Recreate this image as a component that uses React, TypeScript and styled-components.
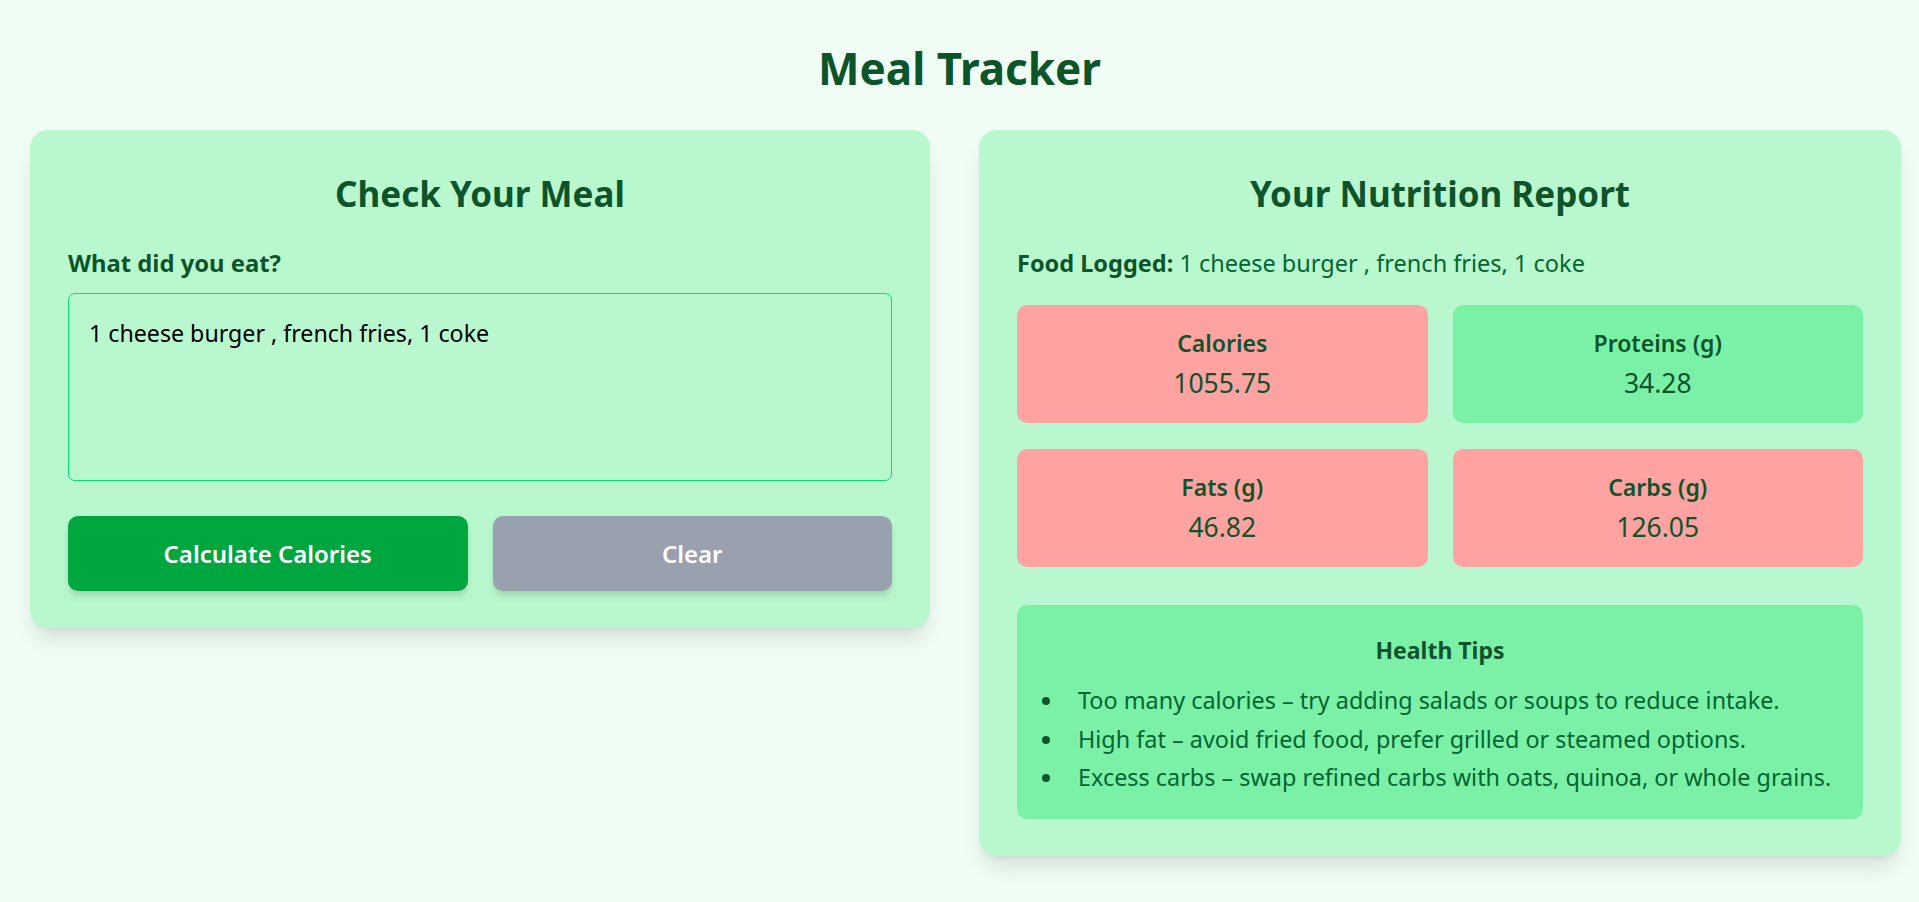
import styled, { createGlobalStyle } from 'styled-components';

const GlobalStyle = createGlobalStyle`
    * {
        box-sizing: border-box;
    }
    body {
        margin: 0;
        background-color: #f0fdf4;
        font-family: 'Noto Sans', 'Open Sans', sans-serif;
    }
`;

const Page = styled.div`
    min-height: 902px;
    padding: 36px 0 40px 0;
`;
const Title = styled.h1`
    margin: 0 0 29px 0;
    text-align: center;
    font-size: 44px;
    line-height: 65px;
    font-weight: 700;
    color: #0d542b;
`;
const Columns = styled.div`
    display: grid;
    grid-template-columns: 900fr 922fr;
    gap: 49px;
    align-items: start;
    padding: 0 18px 0 30px;
`;
const Card = styled.section`
    display: flex;
    flex-direction: column;
    padding: 37px 38px;
    background-color: #b9f8cf;
    border-radius: 18px;
    box-shadow: 0 15px 22px -4px rgba(0, 0, 0, 0.1), 0 6px 9px -6px rgba(0, 0, 0, 0.1);
`;
const CardTitle = styled.h2`
    margin: 0 0 24px 0;
    text-align: center;
    font-size: 35px;
    line-height: 54px;
    font-weight: 700;
    color: #0d542b;
`;
const Label = styled.label`
    margin-bottom: 12px;
    font-size: 23.8px;
    line-height: 36px;
    font-weight: 700;
    color: #0d542b;
`;
const MealInput = styled.textarea`
    height: 188px;
    padding: 21px 21px 21px 20px;
    resize: none;
    background-color: transparent;
    border: 1.5px solid #05df72;
    border-radius: 7px;
    font-family: inherit;
    font-size: 23.2px;
    line-height: 36px;
    color: #000000;
    outline: none;
`;
const ButtonRow = styled.div`
    display: grid;
    grid-template-columns: 1fr 1fr;
    gap: 25px;
    margin-top: 35px;
`;
const ActionButton = styled.button<{$variant: 'primary' | 'muted'}>`
    height: 75px;
    border: none;
    border-radius: 10px;
    background-color: ${props => (props.$variant === 'primary' ? '#00a63e' : '#99a1af')};
    color: #ffffff;
    font-family: inherit;
    font-size: 24px;
    font-weight: 600;
    box-shadow: 0 6px 9px -1px rgba(0, 0, 0, 0.1), 0 3px 6px -2px rgba(0, 0, 0, 0.1);
    cursor: pointer;
`;
const LoggedLine = styled.p`
    margin: 0 0 24px 0;
    font-size: 23.5px;
    line-height: 36px;
    color: #016630;
`;
const LoggedKey = styled.strong`
    font-weight: 700;
    color: #0d542b;
`;
const StatGrid = styled.div`
    display: grid;
    grid-template-columns: 1fr 1fr;
    gap: 26px 25px;
`;
const StatBox = styled.div<{$high: boolean}>`
    display: flex;
    flex-direction: column;
    align-items: center;
    justify-content: center;
    height: 118px;
    padding-bottom: 2px;
    border-radius: 10px;
    background-color: ${props => (props.$high ? '#ffa2a2' : '#7bf1a8')};
    color: #0d542b;
`;
const StatName = styled.span`
    font-size: 23px;
    line-height: 36px;
    font-weight: 600;
`;
const StatValue = styled.span`
    margin-top: 3px;
    font-size: 26.5px;
    line-height: 38px;
`;
const TipsBox = styled.div`
    margin-top: 38px;
    padding: 24px 24px 22px 24px;
    border-radius: 10px;
    background-color: #7bf1a8;
`;
const TipsTitle = styled.h3`
    margin: 0 0 10px 0;
    text-align: center;
    font-size: 23px;
    line-height: 42px;
    font-weight: 700;
    color: #0d542b;
`;
const TipsList = styled.ul`
    margin: 0;
    padding-left: 24px;
    list-style: disc;
`;
const TipItem = styled.li`
    padding-left: 13px;
    font-size: 23.4px;
    line-height: 38.6px;
    color: #016630;
    &::marker {
        color: #0d542b;
    }
`;

const stats = [
    {name: 'Calories', value: '1055.75', high: true},
    {name: 'Proteins (g)', value: '34.28', high: false},
    {name: 'Fats (g)', value: '46.82', high: true},
    {name: 'Carbs (g)', value: '126.05', high: true},
];

const tips = [
    'Too many calories – try adding salads or soups to reduce intake.',
    'High fat – avoid fried food, prefer grilled or steamed options.',
    'Excess carbs – swap refined carbs with oats, quinoa, or whole grains.',
];

const meal = '1 cheese burger , french fries, 1 coke';

const App = () => {
    return (
        <>
            <GlobalStyle />
            <Page>
                <Title>Meal Tracker</Title>
                <Columns>
                    <Card>
                        <CardTitle>Check Your Meal</CardTitle>
                        <Label htmlFor="meal">What did you eat?</Label>
                        <MealInput id="meal" defaultValue={meal} />
                        <ButtonRow>
                            <ActionButton $variant="primary">Calculate Calories</ActionButton>
                            <ActionButton $variant="muted">Clear</ActionButton>
                        </ButtonRow>
                    </Card>
                    <Card>
                        <CardTitle>Your Nutrition Report</CardTitle>
                        <LoggedLine>
                            <LoggedKey>Food Logged:</LoggedKey> {meal}
                        </LoggedLine>
                        <StatGrid>
                            {stats.map(stat => (
                                <StatBox key={stat.name} $high={stat.high}>
                                    <StatName>{stat.name}</StatName>
                                    <StatValue>{stat.value}</StatValue>
                                </StatBox>
                            ))}
                        </StatGrid>
                        <TipsBox>
                            <TipsTitle>Health Tips</TipsTitle>
                            <TipsList>
                                {tips.map(tip => (
                                    <TipItem key={tip}>{tip}</TipItem>
                                ))}
                            </TipsList>
                        </TipsBox>
                    </Card>
                </Columns>
            </Page>
        </>
    );
};

export default App;
